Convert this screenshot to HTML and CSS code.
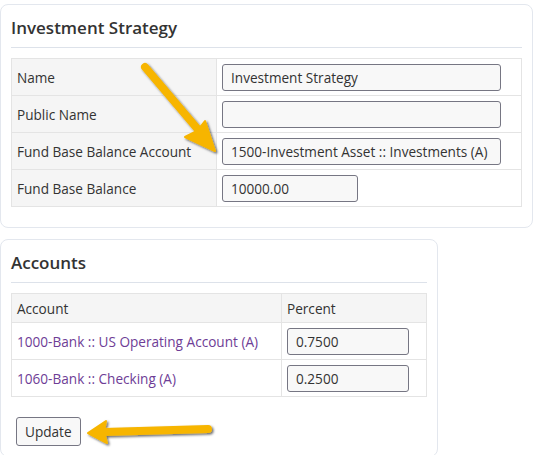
FILE: index.html
```html
<!DOCTYPE html>
<html lang="en">
<head>
    <meta charset="UTF-8">
    <title>Investment Strategy</title>
    <link rel="stylesheet" href="styles.css">
</head>
<body>
    <div class="card card-strategy">
        <h2>Investment Strategy</h2>
        <table class="form-table">
            <tr>
                <th>Name</th>
                <td><input type="text" class="wide" value="Investment Strategy"></td>
            </tr>
            <tr>
                <th>Public Name</th>
                <td><input type="text" class="wide" value=""></td>
            </tr>
            <tr>
                <th>Fund Base Balance Account</th>
                <td><input type="text" class="wide" value="1500-Investment Asset :: Investments (A)"></td>
            </tr>
            <tr>
                <th>Fund Base Balance</th>
                <td><input type="text" class="short" value="10000.00"></td>
            </tr>
        </table>
    </div>

    <div class="card card-accounts">
        <h2>Accounts</h2>
        <table class="list-table">
            <tr>
                <th class="col-account">Account</th>
                <th>Percent</th>
            </tr>
            <tr>
                <td><a href="#">1000-Bank :: US Operating Account (A)</a></td>
                <td><input type="text" class="pct" value="0.7500"></td>
            </tr>
            <tr>
                <td><a href="#">1060-Bank :: Checking (A)</a></td>
                <td><input type="text" class="pct" value="0.2500"></td>
            </tr>
        </table>
        <button class="update-btn">Update</button>
    </div>

    <!-- callout arrows -->
    <svg class="arrow arrow-down" width="100" height="110" viewBox="0 0 100 110">
        <defs>
            <filter id="sh" x="-20%" y="-20%" width="140%" height="140%">
                <feDropShadow dx="1.5" dy="1.5" stdDeviation="1.2" flood-color="#000" flood-opacity="0.6"/>
            </filter>
        </defs>
        <g filter="url(#sh)">
            <line x1="12" y1="10" x2="68" y2="76" stroke="#f7b500" stroke-width="8" stroke-linecap="round"/>
            <path d="M82 94 L52 80 L64 74 L72 64 L82 94 Z" fill="#f7b500" stroke="#f7b500" stroke-width="2" stroke-linejoin="round"/>
        </g>
    </svg>
    <svg class="arrow arrow-left" width="150" height="40" viewBox="0 0 150 40">
        <defs>
            <filter id="sh2" x="-20%" y="-40%" width="140%" height="180%">
                <feDropShadow dx="1.5" dy="1.5" stdDeviation="1.2" flood-color="#000" flood-opacity="0.6"/>
            </filter>
        </defs>
        <g filter="url(#sh2)">
            <line x1="24" y1="21" x2="128" y2="18" stroke="#f7b500" stroke-width="8" stroke-linecap="round"/>
            <path d="M8 22 L26 10 L24 21 L27 32 Z" fill="#f7b500" stroke="#f7b500" stroke-width="2" stroke-linejoin="round"/>
        </g>
    </svg>
</body>
</html>
```

FILE: styles.css
```css
body { font-family: "Open Sans", "Noto Sans", sans-serif; font-size: 13.6px; color: #333; background: #fff; margin: 0; padding: 4px 0 0 0; position: relative; }
.card { background: #fff; border: 1px solid #e3e7ee; border-radius: 8px; padding: 0 10px 10px 10px; }
.card-strategy { width: 511px; padding-bottom: 20px; }
.card-accounts { width: 416px; margin-top: 11px; }
h2 { font-size: 17px; font-weight: 600; color: #333; margin: 0 0 10px 0; padding: 11px 0 8px 0; border-bottom: 1px solid #dde2ea; }
table { border-collapse: collapse; }
.form-table { width: 511px; }
.form-table th, .form-table td { border: 1px solid #e4e4e4; height: 36px; padding: 0 5px; text-align: left; font-weight: 400; }
.form-table th { background: #f5f5f5; width: 194px; }
input { font-family: inherit; font-size: 13.6px; color: #333; background: #f8f8f8; border: 1px solid #767683; border-radius: 3px; height: 27px; box-sizing: border-box; padding: 0 8px; }
input.wide { width: 279px; }
input.short { width: 136px; }
input.pct { width: 122px; }
.list-table { width: 416px; }
.list-table th, .list-table td { border: 1px solid #e4e4e4; padding: 0 5px; text-align: left; font-weight: 400; height: 36px; }
.list-table th { background: #f5f5f5; height: 28px; }
.col-account { width: 259px; }
.list-table a { color: #6e3d96; text-decoration: none; }
.update-btn { font-family: inherit; font-size: 13.6px; color: #333; background: #f8f8f8; border: 1px solid #767683; border-radius: 3px; padding: 4px 8px; margin: 20px 0 0 5px; cursor: pointer; }
.arrow { position: absolute; pointer-events: none; }
.arrow-down { left: 133px; top: 57px; }
.arrow-left { left: 80px; top: 411px; }
```
